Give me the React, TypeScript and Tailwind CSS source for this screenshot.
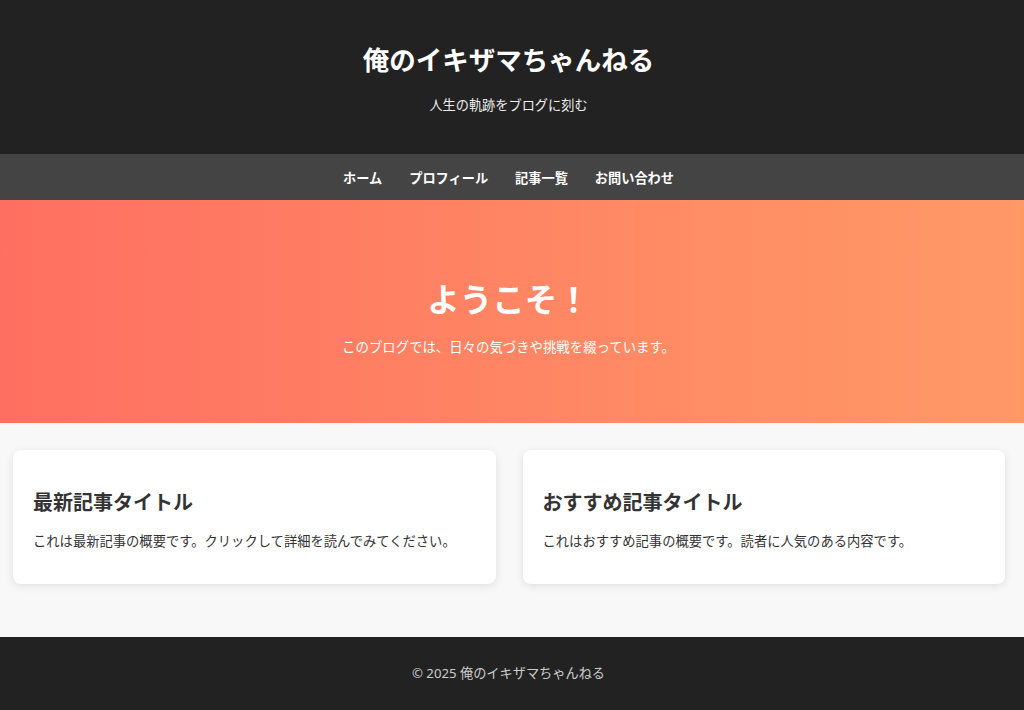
const font = { fontFamily: '"Noto Sans", "Noto Sans CJK JP", sans-serif' };

const navItems = ["ホーム", "プロフィール", "記事一覧", "お問い合わせ"];

const posts = [
  {
    title: "最新記事タイトル",
    body: "これは最新記事の概要です。クリックして詳細を読んでみてください。",
  },
  {
    title: "おすすめ記事タイトル",
    body: "これはおすすめ記事の概要です。読者に人気のある内容です。",
  },
];

export default function App() {
  return (
    <div className="min-h-[710px] bg-[#f8f8f8] text-[#333]" style={font}>
      {/* Header */}
      <header className="h-[154px] bg-[#222] text-white flex flex-col items-center pt-[39px] pr-[7px]">
        <h1 className="text-[26.5px] font-bold leading-[42px]">俺のイキザマちゃんねる</h1>
        <p className="mt-[14px] text-[13.2px] leading-[20px] text-[#eee]">人生の軌跡をブログに刻む</p>
      </header>

      {/* Nav */}
      <nav className="h-[46px] bg-[#444] flex items-center justify-center gap-[27px] pt-[3px] pr-[7px]">
        {navItems.map((item) => (
          <a key={item} href="#" className="text-white text-[13.2px] font-bold">
            {item}
          </a>
        ))}
      </nav>

      {/* Hero */}
      <section className="h-[223px] bg-gradient-to-r from-[#ff6f61] to-[#ff9966] text-white flex flex-col items-center justify-center pr-[7px]">
        <h2 className="text-[32.5px] font-bold leading-[44px] mt-[12px]">ようこそ！</h2>
        <p className="mt-[15px] text-[13.4px] leading-[20px]">このブログでは、日々の気づきや挑戦を綴っています。</p>
      </section>

      {/* Posts */}
      <main className="grid grid-cols-2 gap-[27px] pl-[13px] pr-[19px] pt-[27px] pb-[53px]">
        {posts.map((post) => (
          <article
            key={post.title}
            className="h-[134px] bg-white rounded-[8px] shadow-[0_2px_8px_rgba(0,0,0,0.1)] px-[20px] pt-[36px]"
          >
            <h3 className="text-[20px] font-bold leading-[32px] text-[#333] mt-[1px]">{post.title}</h3>
            <p className="mt-[12px] text-[13.3px] leading-[20px] text-[#333]">{post.body}</p>
          </article>
        ))}
      </main>

      {/* Footer */}
      <footer className="h-[73px] bg-[#222] flex items-center justify-center pr-[7px]">
        <p className="text-[13.2px] text-[#ccc]">© 2025 俺のイキザマちゃんねる</p>
      </footer>
    </div>
  );
}
